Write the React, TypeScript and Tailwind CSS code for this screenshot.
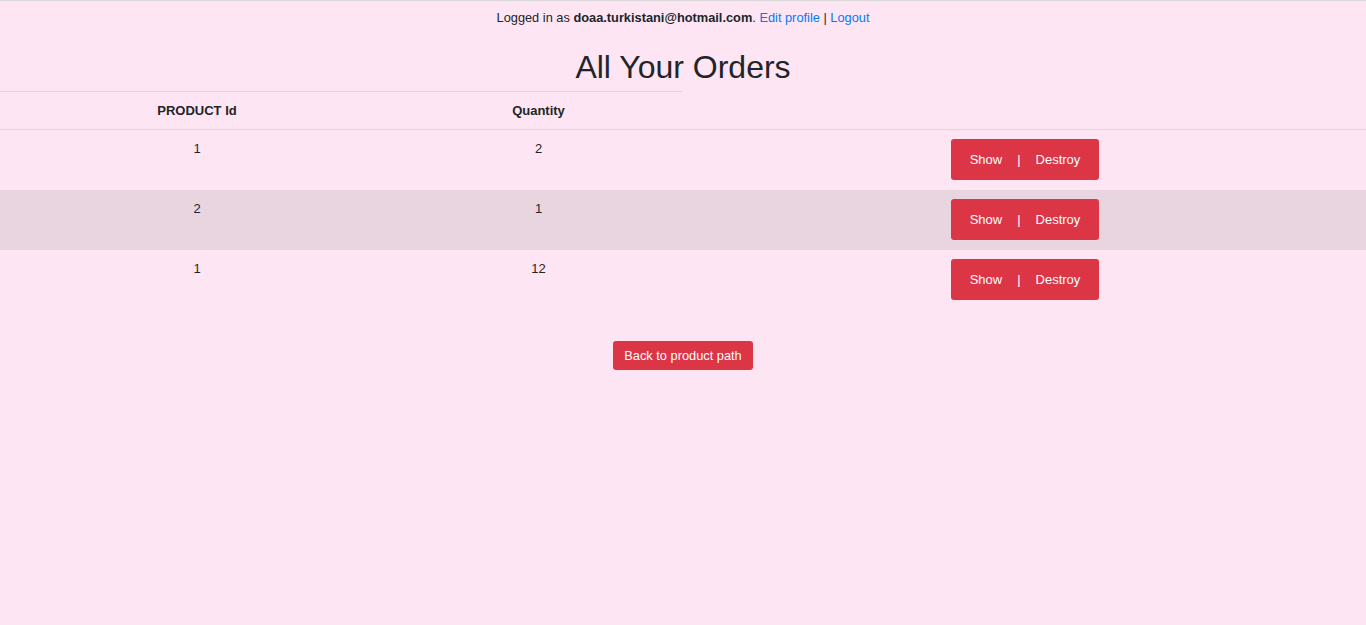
import React from "react";

const rows = [
  { id: "1", qty: "2" },
  { id: "2", qty: "1" },
  { id: "1", qty: "12" },
];

export default function App() {
  return (
    <div
      className="min-h-[625px] w-full bg-[#fde5f3] text-[#212529] border-t border-[#d9d9d9]"
      style={{ fontFamily: '"Liberation Sans", Arial, sans-serif' }}
    >
      <div className="pt-[7px] text-center text-[12.8px] leading-[20px]">
        Logged in as <b>doaa.turkistani@hotmail.com</b>.{" "}
        <a className="text-[#007bff]">Edit profile</a> |{" "}
        <a className="text-[#007bff]">Logout</a>
      </div>
      <h1 className="mt-[21px] text-center text-[32px] leading-[36px] h-[36px]">
        All Your Orders
      </h1>
      <div className="mt-[6px]">
        <div className="flex h-[39px] items-center text-[13px] font-bold border-b border-[#e4d3dc]">
          <div className="w-[394px] h-full flex items-center justify-center border-t border-[#e4d3dc]">
            PRODUCT Id
          </div>
          <div className="w-[289px] h-full flex items-center justify-center border-t border-[#e4d3dc]">
            Quantity
          </div>
          <div className="flex-1" />
        </div>
        {rows.map((r, i) => (
          <div
            key={i}
            className={`flex h-[60px] text-[13px] ${i % 2 === 1 ? "bg-[#e9d5e0]" : ""}`}
          >
            <div className="w-[394px] pt-[9px] text-center leading-[20px]">{r.id}</div>
            <div className="w-[289px] pt-[9px] text-center leading-[20px]">{r.qty}</div>
            <div className="flex-1 flex justify-center pt-[9px] pl-[1px]">
              <div className="flex h-[41px] w-[148px] items-center justify-center gap-[15px] rounded-[3px] bg-[#dc3545] text-[13px] text-white">
                <span>Show</span>
                <span>|</span>
                <span>Destroy</span>
              </div>
            </div>
          </div>
        ))}
      </div>
      <div className="mt-[31px] flex justify-center">
        <div className="flex h-[29px] items-center rounded-[3px] bg-[#dc3545] px-[11px] text-[12.8px] text-white">
          Back to product path
        </div>
      </div>
    </div>
  );
}
